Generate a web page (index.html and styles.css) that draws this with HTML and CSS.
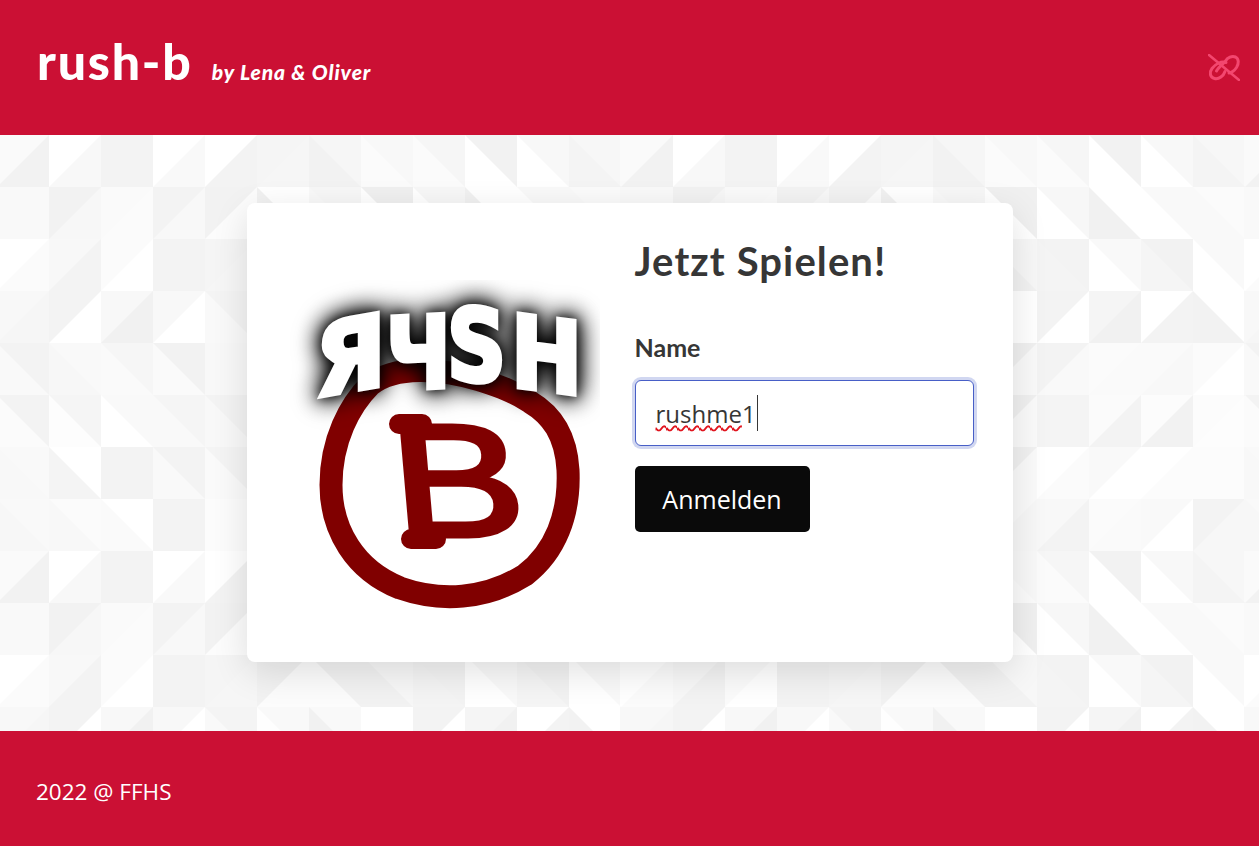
FILE: index.html
```html
<!DOCTYPE html>
<html lang="de">
<head>
    <meta charset="UTF-8">
    <meta name="viewport" content="width=device-width, initial-scale=1.0">
    <title>rush-b</title>
    <link rel="stylesheet" href="styles.css">
</head>
<body>

    <header class="topbar">
        <div class="brand">
            <span class="brand-name">rush-b</span>
            <span class="brand-by">by Lena &amp; Oliver</span>
        </div>
        <svg class="status-icon" viewBox="0 0 32 27" aria-label="nicht verbunden">
            <path d="M18 8.500C13 7 7.500 10 4 14.500C1 18.500 2 23.500 6.500 24.500C11 25.500 15.500 22 17 17.500"/>
            <path d="M8.500 17C10.500 13 16 9.500 17.500 7C19.500 3.500 24 1.500 27.500 3C31 5 31 9.500 28.500 13.500C26.500 16.500 24 18.500 21 19"/>
            <path class="status-slash" d="M1 1L31 26"/>
        </svg>
    </header>

    <main class="board" id="board">
        <section class="card">
            <svg class="logo" viewBox="0 0 310 340" role="img" aria-label="Rush B Logo">
                <path class="logo-ring" d="M80 105C60 125 41 160 41 205C41 250 65 290 110 308C150 322 195 320 235 295C265 272 280 235 278 190C276 155 262 135 240 122C222 110 205 105 190 100C150 88 105 85 80 105Z"/>
                <g class="logo-mark">
                    <text class="logo-b" transform="translate(106 256) skewX(5) scale(1.24 1)">B</text>
                    <path class="logo-serif" d="M109 144H132M121 259H146"/>
                </g>
                <g class="logo-word">
                    <text transform="matrix(.92 -.16 0 1 25 117)">Я</text>
                    <text transform="matrix(.8 -.04 0 1 96 110)">Ч</text>
                    <text transform="matrix(.82 .05 0 1 157 99)">S</text>
                    <text transform="matrix(.85 .11 0 1 221 106)">H</text>
                </g>
            </svg>
            <form class="login">
                <h1 class="login-title">Jetzt Spielen!</h1>
                <label class="login-label" for="name">Name</label>
                <div class="input" id="name" role="textbox"><span class="typo">rushme</span>1<span class="caret"></span></div>
                <button class="btn" type="button">Anmelden</button>
            </form>
        </section>
    </main>

    <footer class="bottombar">2022 @ FFHS</footer>

    <script src="script.js"></script>
</body>
</html>
```

FILE: styles.css
```css
body {
    margin: 0;
    height: 100vh;
    display: flex;
    flex-direction: column;
    font-family: "Open Sans", "Noto Sans", sans-serif;
    color: #363636;
    overflow: hidden;
}

.topbar {
    height: 135px;
    flex: none;
    display: flex;
    justify-content: space-between;
    align-items: center;
    padding: 0 19px 0 37px;
    background-color: #cb1034;
    color: #fff;
}
.brand {
    display: flex;
    align-items: baseline;
    gap: 19px;
    margin-bottom: 13px;
    font-family: Lato, sans-serif;
    font-weight: 900;
}
.brand-name {
    font-size: 50px;
    letter-spacing: 1.8px;
}
.brand-by {
    font-size: 21px;
    font-style: italic;
    letter-spacing: .9px;
}
.status-icon {
    width: 32px;
    height: 27px;
    fill: none;
    stroke: #f3476f;
    stroke-width: 3;
    stroke-linecap: round;
}
.status-slash {
    stroke-width: 2.5;
}

.board {
    flex: 1;
    display: flex;
    justify-content: center;
    align-items: center;
    background-color: #f8f8f8;
    background-size: 624px 416px;
    background-position: -3.5px 0;
}
.card {
    width: 766px;
    height: 459px;
    box-sizing: border-box;
    margin-bottom: 1px;
    padding: 39px;
    display: grid;
    grid-template-columns: 310px 339px;
    justify-content: space-between;
    background-color: #fff;
    border-radius: 8px;
    box-shadow: 0 10px 36px rgba(10, 10, 10, .12);
}

.logo {
    width: 310px;
    height: 340px;
    margin: 38px 0 0 4px;
}
.logo-ring {
    fill: none;
    stroke: #800000;
    stroke-width: 23;
    filter: blur(.5px);
}
.logo-mark {
    filter: blur(.5px);
}
.logo-b {
    font-family: "Liberation Sans", sans-serif;
    font-size: 160px;
    fill: #800000;
    stroke: #800000;
    stroke-width: 5;
    stroke-linejoin: round;
}
.logo-serif {
    fill: none;
    stroke: #800000;
    stroke-width: 20;
    stroke-linecap: round;
}
.logo-word {
    font-family: "DejaVu Sans", sans-serif;
    font-weight: 700;
    font-size: 100px;
    fill: #fff;
    stroke: #fff;
    stroke-width: 5;
    filter: drop-shadow(0 0 12px #000) drop-shadow(0 0 6px #000);
}

.login-title {
    margin: -5px 0 47px;
    font-family: Lato, sans-serif;
    font-weight: 700;
    font-size: 40px;
    line-height: 48px;
    letter-spacing: 1.1px;
}
.login-label {
    display: block;
    margin-bottom: 18px;
    font-family: Lato, sans-serif;
    font-weight: 700;
    font-size: 25px;
    line-height: 30px;
}
.input {
    height: 66px;
    box-sizing: border-box;
    display: flex;
    align-items: center;
    padding-left: 20px;
    border: 1px solid #485fc7;
    border-radius: 6px;
    box-shadow: 0 0 0 3px rgba(72, 95, 199, .25);
    font-size: 24px;
    background-color: #fff;
}
.typo {
    text-decoration: underline wavy #e0141e 1.5px;
    text-underline-offset: 2px;
}
.caret {
    width: 1px;
    height: 36px;
    margin-left: 1px;
    background-color: #363636;
}
.btn {
    display: block;
    height: 66px;
    width: 175px;
    margin-top: 20px;
    padding: 0;
    border: none;
    border-radius: 5px;
    background-color: #0a0a0a;
    color: #fff;
    font-family: inherit;
    font-size: 25px;
    cursor: pointer;
}

.bottombar {
    height: 115px;
    flex: none;
    box-sizing: border-box;
    display: flex;
    align-items: center;
    padding: 6px 0 0 36px;
    background-color: #cb1034;
    color: #fff;
    font-size: 22.5px;
}
```

FILE: script.js
```js
// background tile: 12 x 8 squares, each cut in two triangles
// R = rising diagonal (top-left, bottom-right), F = falling (bottom-left, top-right)
const tileRows = [
    "Rfaf2 Rfff8 Rf3f3 Rfff9 Rfff3 Rf5f6 Ff2f6 Ffbf8 Ffbf6 Ffff2 Ffff8 Ff4f7",
    "Rf9f9 Rf2f7 Rfafb Rf3f8 Rf2fc Ff1ff Ff9f7 Ffff0 Ffff7 Ff1ff Ffff9 Ff9fb",
    "Rfffb Rf8f3 Rfbff Rf3f3 Rf5f6 Rf2fc Ffcf2 Ff2f7 Ff4f3 Ffff9 Ff5f2 Ffff9",
    "Rf8f6 Rf3ff Rf8f1 Rf8ff Ff9f4 Ffef9 Ff1f9 Rffff Rf3ff Rf5f1 Rfff3 Ff2ff",
    "Ff9f3 Ff7f9 Ffaf6 Ffaf2 Rf8f8 Rf8f8 Rf8f8 Rf0f9 Rf3f9 Rfbfa Rfaf8 Rfbff",
    "Ffbf3 Ffdf5 Ffff9 Ff9f5 Ff8f3 Rf8f8 Rf8f8 Rf0fa Rf4f4 Rfbf3 Rfcf2 Rfcfd",
    "Ff8f9 Ff4ff Ff3f3 Ff9f3 Ffaf4 Rf8f8 Rf8f8 Rf1fa Rfffb Rf9ff Rfffc Rfcfc",
    "Ff7f9 Ff8fb Ffaff Rf3f3 Rfcfc Rf8f8 Rf8f8 Rfaf7 Rf8f3 Rfbfa Rf9ff Rf3f7"
];

function grey(hex) {
    return "#" + hex + hex + hex;
}

function tileSvg() {
    const size = 52;
    let shapes = "";
    tileRows.forEach((row, y) => {
        row.split(" ").forEach((cell, x) => {
            const left = x * size;
            const top = y * size;
            shapes += `<rect x="${left}" y="${top}" width="${size}" height="${size}" fill="${grey(cell.slice(3))}"/>`;
            const path = cell[0] === "R"
                ? `M${left} ${top}h${size}L${left} ${top + size}z`
                : `M${left} ${top}v${size}h${size}z`;
            shapes += `<path d="${path}" fill="${grey(cell.slice(1, 3))}"/>`;
        });
    });
    return `<svg xmlns="http://www.w3.org/2000/svg" width="624" height="416">${shapes}</svg>`;
}

document.getElementById("board").style.backgroundImage =
    `url("data:image/svg+xml,${encodeURIComponent(tileSvg())}")`;
```
